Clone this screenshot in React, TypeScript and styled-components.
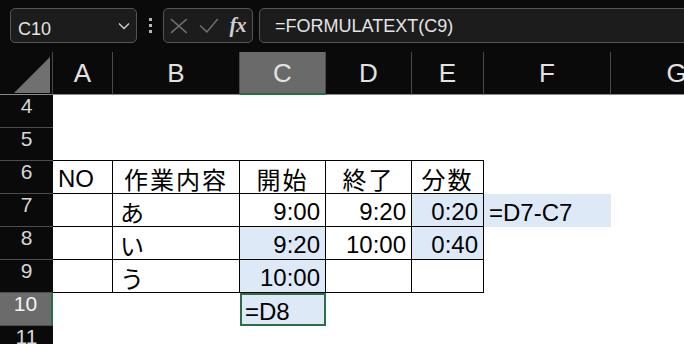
import styled, { createGlobalStyle } from "styled-components";

const Global = createGlobalStyle`
  html, body {
    margin: 0;
    padding: 0;
    background-color: #0a0a0a;
    overflow: hidden;
  }
`;

const Root = styled.div`
  width: 684px;
  height: 344px;
  overflow: hidden;
  background-color: #0a0a0a;
  display: flex;
  flex-direction: column;
`;

const TopBar = styled.div`
  height: 52px;
  flex: none;
  display: flex;
  align-items: flex-start;
  padding: 8px 0 0 10px;
  box-sizing: border-box;
  font-family: "Liberation Sans", Arial, sans-serif;
`;

const BarBox = styled.div`
  height: 35px;
  box-sizing: border-box;
  border: 1px solid #555;
  border-radius: 5px;
  background-color: #1c1c1c;
  display: flex;
  align-items: center;
`;

const NameBox = styled(BarBox)`
  width: 127px;
  justify-content: space-between;
  padding: 6px 6px 0 7px;
  color: #e4e4e4;
  font-size: 18px;
  line-height: 20px;
  svg {
    margin-top: -6px;
  }
`;

const Dots = styled.div`
  width: 26px;
  height: 35px;
  display: flex;
  flex-direction: column;
  align-items: center;
  justify-content: center;
  gap: 3px;
  span {
    width: 3px;
    height: 3px;
    background-color: #b8b8b8;
  }
`;

const FxBox = styled(BarBox)`
  width: 90px;
  padding: 0 6px 0 6px;
  gap: 11px;
`;

const FxText = styled.span`
  font-family: "Liberation Serif", "Times New Roman", serif;
  font-style: italic;
  font-weight: bold;
  font-size: 21px;
  color: #cfcfcf;
  letter-spacing: -0.5px;
`;

const FormulaBox = styled(BarBox)`
  flex: 1;
  margin-left: 6px;
  margin-right: -10px;
  padding-left: 15px;
  color: #e4e4e4;
  font-size: 18px;
  line-height: 20px;
`;

const Sheet = styled.div`
  display: grid;
  grid-template-columns: 53px 60px 127px 86px 86px 72px 127px 132px;
  grid-template-rows: 43px repeat(8, 33px);
  background-color: #ffffff;
  font-family: "Liberation Sans", Arial, "Noto Sans CJK JP", sans-serif;
`;

const Corner = styled.div`
  background-color: #0a0a0a;
  border-right: 1px solid #4a4a4a;
  border-bottom: 1px solid #8a8a8a;
  position: relative;
  svg {
    position: absolute;
    left: 14px;
    top: 5px;
  }
`;

const ColHead = styled.div<{ $sel?: boolean }>`
  background-color: ${(p) => (p.$sel ? "#6a6a6a" : "#0a0a0a")};
  border-right: 1px solid #4a4a4a;
  border-bottom: ${(p) => (p.$sel ? "2px solid #217346" : "1px solid #8a8a8a")};
  color: #e2e2e2;
  font-size: 26px;
  line-height: 30px;
  display: flex;
  align-items: center;
  justify-content: center;
  box-sizing: border-box;
`;

const RowHead = styled.div<{ $sel?: boolean }>`
  background-color: ${(p) => (p.$sel ? "#6b6b6b" : "#0a0a0a")};
  border-bottom: 1px solid #4d4d4d;
  border-right: ${(p) => (p.$sel ? "2px solid #217346" : "none")};
  color: ${(p) => (p.$sel ? "#f4f4f4" : "#d6d6d6")};
  font-size: 21px;
  line-height: 24px;
  display: flex;
  align-items: center;
  justify-content: center;
  padding-bottom: 10px;
  box-sizing: border-box;
`;

const Cell = styled.div<{
  $fill?: boolean;
  $b?: boolean;
  $r?: boolean;
  $align?: "left" | "right" | "center";
  $active?: boolean;
}>`
  background-color: ${(p) => (p.$fill ? "#dde9f6" : "#ffffff")};
  border-bottom: ${(p) => (p.$b ? "1px solid #000" : "none")};
  border-right: ${(p) => (p.$r ? "1px solid #000" : "none")};
  box-shadow: ${(p) => (p.$active ? "inset 0 0 0 2px #2b6e4a" : "none")};
  box-sizing: border-box;
  display: flex;
  align-items: flex-end;
  justify-content: ${(p) =>
    p.$align === "right" ? "flex-end" : p.$align === "center" ? "center" : "flex-start"};
  padding: 0 5px;
  font-size: 24px;
  line-height: 28px;
  color: #000;
  white-space: nowrap;
`;

const Jp = styled.span`
  font-family: "Noto Sans CJK JP", sans-serif;
  font-size: 24px;
  letter-spacing: 2px;
`;

const Kana = styled.span`
  font-family: "Noto Sans CJK JP", sans-serif;
  font-size: 24px;
  padding-left: 2px;
`;

type C = {
  t?: React.ReactNode;
  fill?: boolean;
  b?: boolean;
  r?: boolean;
  align?: "left" | "right" | "center";
  active?: boolean;
};

const cols = ["A", "B", "C", "D", "E", "F", "G"];

// bordered table cell
const T = { b: true, r: true };

const rows: { n: number; cells: C[] }[] = [
  { n: 4, cells: [{}, {}, {}, {}, {}, {}, {}] },
  { n: 5, cells: [{ b: true }, { b: true }, { b: true }, { b: true }, { b: true }, {}, {}] },
  {
    n: 6,
    cells: [
      { ...T, t: "NO" },
      { ...T, t: <Jp>作業内容</Jp>, align: "center" },
      { ...T, t: <Jp>開始</Jp>, align: "center" },
      { ...T, t: <Jp>終了</Jp>, align: "center" },
      { ...T, t: <Jp>分数</Jp>, align: "center" },
      {},
      {},
    ],
  },
  {
    n: 7,
    cells: [
      { ...T },
      { ...T, t: <Kana>あ</Kana> },
      { ...T, t: "9:00", align: "right" },
      { ...T, t: "9:20", align: "right" },
      { ...T, t: "0:20", align: "right", fill: true },
      { t: "=D7-C7", fill: true },
      {},
    ],
  },
  {
    n: 8,
    cells: [
      { ...T },
      { ...T, t: <Kana>い</Kana> },
      { ...T, t: "9:20", align: "right", fill: true },
      { ...T, t: "10:00", align: "right" },
      { ...T, t: "0:40", align: "right", fill: true },
      {},
      {},
    ],
  },
  {
    n: 9,
    cells: [
      { ...T },
      { ...T, t: <Kana>う</Kana> },
      { ...T, t: "10:00", align: "right", fill: true },
      { ...T },
      { ...T },
      {},
      {},
    ],
  },
  {
    n: 10,
    cells: [{}, {}, { t: "=D8", fill: true, active: true }, {}, {}, {}, {}],
  },
  { n: 11, cells: [{}, {}, {}, {}, {}, {}, {}] },
];

export default function App() {
  return (
    <Root>
      <Global />
      <TopBar>
        <NameBox>
          C10
          <svg width="12" height="8" viewBox="0 0 12 8">
            <polyline points="1,1.5 6,6.5 11,1.5" fill="none" stroke="#cfcfcf" strokeWidth="1.4" />
          </svg>
        </NameBox>
        <Dots>
          <span />
          <span />
          <span />
        </Dots>
        <FxBox>
          <svg width="18" height="16" viewBox="0 0 18 16">
            <path d="M1 1 L17 15 M17 1 L1 15" stroke="#6e6e6e" strokeWidth="1.5" fill="none" />
          </svg>
          <svg width="20" height="15" viewBox="0 0 20 15">
            <polyline points="1,7.5 8,14 19,1" stroke="#6e6e6e" strokeWidth="1.5" fill="none" />
          </svg>
          <FxText>fx</FxText>
        </FxBox>
        <FormulaBox>=FORMULATEXT(C9)</FormulaBox>
      </TopBar>
      <Sheet>
        <Corner>
          <svg width="37" height="36" viewBox="0 0 37 36">
            <polygon points="0,36 36,0 36,36" fill="#707070" />
          </svg>
        </Corner>
        {cols.map((c) => (
          <ColHead key={c} $sel={c === "C"}>
            {c}
          </ColHead>
        ))}
        {rows.map((row) => [
          <RowHead key={"h" + row.n} $sel={row.n === 10}>
            {row.n}
          </RowHead>,
          ...row.cells.map((cell, i) => (
            <Cell
              key={row.n + "-" + i}
              $fill={cell.fill}
              $b={cell.b}
              $r={cell.r}
              $align={cell.align}
              $active={cell.active}
            >
              {cell.t}
            </Cell>
          )),
        ])}
      </Sheet>
    </Root>
  );
}
